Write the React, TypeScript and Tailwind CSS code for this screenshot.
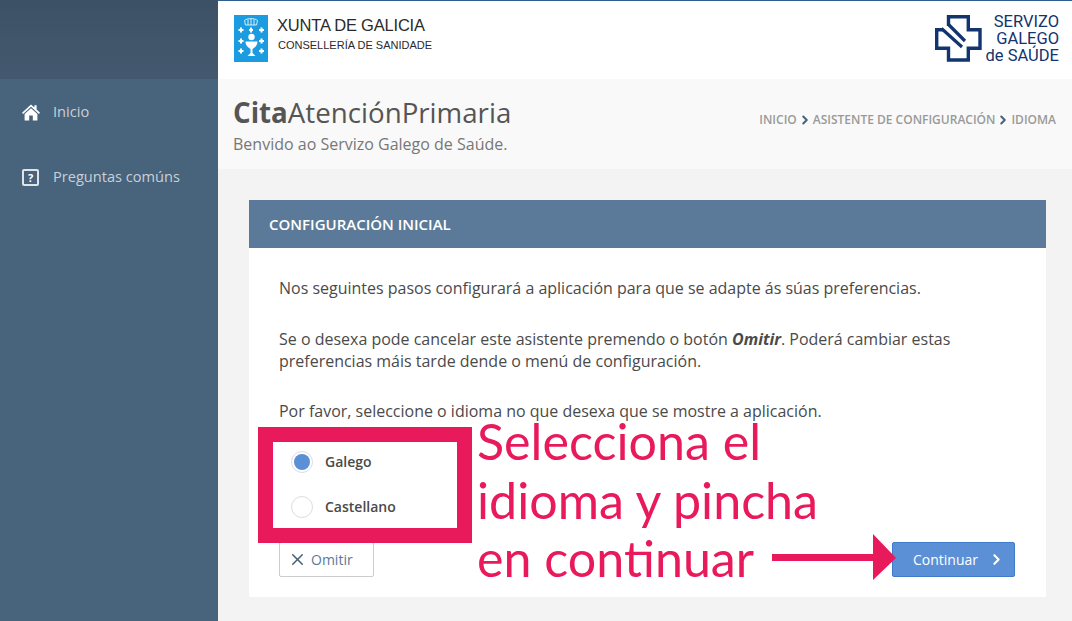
import { FC, ReactNode } from "react"
import { ChevronRight, X } from "lucide-react"

const HomeIcon: FC = () => {
    return <svg width="18" height="17" viewBox="0 0 18 17" fill="#ffffff">
        <path d="M9 0.5 L12.4 3.6 V1.2 H14.6 V5.6 L18 8.7 L16.9 9.9 L9 2.8 L1.1 9.9 L0 8.7 Z" />
        <path d="M9 4.2 L15.4 9.9 V16.5 H10.8 V11.4 H7.2 V16.5 H2.6 V9.9 Z" />
    </svg>
}

const QuestionIcon: FC = () => {
    return <span className="flex h-[17px] w-[17px] items-center justify-center rounded-[2px] border-2 border-[#dfe4e9] text-[11px] leading-none font-bold text-white">?</span>
}

const XuntaLogo: FC = () => {
    return <svg width="34" height="47" viewBox="0 0 34 47">
        <rect width="34" height="47" fill="#1b9ce0" />
        <path d="M11.500 10 L10.500 5.500 C13 3 21 3 23.500 5.500 L22.500 10 Z M14 10 V4.500 M17 10 V4 M20 10 V4.500" fill="none" stroke="#fff" strokeWidth="0.8" />
        <path d="M4.500 14h1.500v-1.500h2v1.500h1.500v2h-1.500v1.500h-2v-1.500h-1.500z M15 14h1v-1.500h2v1.500h1v2h-1v1.500h-2v-1.500h-1z M25 14h1.500v-1.500h2v1.500h1.500v2h-1.500v1.500h-2v-1.500h-1.500z M4.500 25h1.500v-1.500h2v1.500h1.500v2h-1.500v1.500h-2v-1.500h-1.500z M25 25h1.500v-1.500h2v1.500h1.500v2h-1.500v1.500h-2v-1.500h-1.500z M4.500 35h1.500v-1.500h2v1.500h1.500v2h-1.500v1.500h-2v-1.500h-1.500z M25 35h1.500v-1.500h2v1.500h1.500v2h-1.500v1.500h-2v-1.500h-1.500z" fill="#fff" />
        <circle cx="17.500" cy="22" r="3.200" fill="#fff" />
        <path d="M11.500 26.500 H23.500 C23.500 31 20 33 18.500 34 V38 L21.500 41 H13.500 L16.500 38 V34 C15 33 11.500 31 11.500 26.500 Z" fill="#fff" />
    </svg>
}

const SergasLogo: FC = () => {
    return <svg width="47" height="47" viewBox="0 0 47 47" fill="none">
        <path d="M13.500 11 V1.700 H33.300 V14.700 H45 V33.300 H33.300 V45 H13.500 V33.300 H1.700 V14.700 H8" stroke="#12346f" strokeWidth="3.400" />
        <path d="M6.500 13.500 L27 32 M14 10 L30 26" stroke="#12346f" strokeWidth="3.200" />
    </svg>
}

const Radio: FC<{ label: string, checked?: boolean }> = ({ label, checked }) => {
    return <div className="flex h-[45px] items-center">
        <span className="flex h-[22px] w-[22px] items-center justify-center rounded-full border border-[#dddddd] bg-white">
            {checked && <span className="h-4 w-4 rounded-full bg-[#5b8fd6]" />}
        </span>
        <span className="ml-[12px] text-[14px] font-semibold text-[#4a4a4a]">{label}</span>
    </div>
}

const NavItem: FC<{ icon: ReactNode, label: string, className?: string }> = ({ icon, label, className }) => {
    return <div className={`flex items-center text-[14.600px] text-[#c8d0d8] ${className}`}>
        <span className="flex w-[31px]">{icon}</span>
        {label}
    </div>
}

export default function App() {
    return <div className="relative flex h-[621px] w-[1072px] overflow-hidden bg-[#f3f3f3] font-['Open_Sans',sans-serif]">
        <aside className="flex w-[218px] shrink-0 flex-col bg-[#48637c]">
            <div className="h-[79px] bg-gradient-to-b from-[#3d5166] to-[#44596f]" />
            <NavItem className="mt-[23px] ml-[22px] h-[20px]" icon={<HomeIcon />} label="Inicio" />
            <NavItem className="mt-[45px] ml-[22px] h-[20px]" icon={<QuestionIcon />} label="Preguntas comúns" />
        </aside>

        <main className="flex min-w-0 flex-1 flex-col">
            <header className="flex h-[79px] items-start justify-between border-t border-[#2f5f8f] bg-white">
                <div className="mt-[14px] ml-[16px] flex">
                    <XuntaLogo />
                    <div className="ml-[9px] font-['Liberation_Sans',sans-serif] text-[#2a2a2a]">
                        <div className="text-[16.500px] leading-[20px] tracking-[-0.2px]">XUNTA DE GALICIA</div>
                        <div className="mt-[3px] ml-[1px] text-[11px] leading-[14px]">CONSELLERÍA DE SANIDADE</div>
                    </div>
                </div>
                <div className="mt-[12px] mr-[13px] flex">
                    <div className="mt-[2px] mr-[4px]"><SergasLogo /></div>
                    <div className="text-right font-['Roboto',sans-serif] text-[16.500px] leading-[17px] text-[#12346f]">
                        <div>SERVIZO</div>
                        <div>GALEGO</div>
                        <div>de SAÚDE</div>
                    </div>
                </div>
            </header>

            <div className="flex h-[90px] items-start justify-between bg-[#f9f9f9] pr-[16px] pl-[15px]">
                <div>
                    <h1 className="mt-[15px] text-[27.700px] leading-[36px] text-[#555555]"><b className="font-bold">Cita</b>AtenciónPrimaria</h1>
                    <p className="mt-[3px] text-[16px] leading-[22px] text-[#777777]">Benvido ao Servizo Galego de Saúde.</p>
                </div>
                <div className="mt-[32px] flex items-center text-[12px] font-semibold text-[#999999]">
                    INICIO
                    <ChevronRight size={14} strokeWidth={3.500} className="mx-[1px] text-[#48637c]" />
                    ASISTENTE DE CONFIGURACIÓN
                    <ChevronRight size={14} strokeWidth={3.500} className="mx-[1px] text-[#48637c]" />
                    IDIOMA
                </div>
            </div>

            <section className="mt-[31px] ml-[31px] flex h-[397px] w-[797px] flex-col bg-white">
                <div className="flex h-[48px] items-center bg-[#5b7a99] pl-[20px] text-[15px] font-semibold text-white">CONFIGURACIÓN INICIAL</div>
                <div className="flex flex-1 flex-col px-[30px] text-[15.990px] leading-[22px] text-[#4a4a4a]">
                    <p className="mt-[29px]">Nos seguintes pasos configurará a aplicación para que se adapte ás súas preferencias.</p>
                    <p className="mt-[29px]">Se o desexa pode cancelar este asistente premendo o botón <b className="font-bold italic">Omitir</b>. Poderá cambiar estas<br />preferencias máis tarde dende o menú de configuración.</p>
                    <p className="mt-[28px]">Por favor, seleccione o idioma no que desexa que se mostre a aplicación.</p>
                    <div className="mt-[17px] ml-[12px] flex flex-col">
                        <Radio label="Galego" checked />
                        <Radio label="Castellano" />
                    </div>
                    <div className="mt-[13px] flex items-center justify-between">
                        <button className="flex h-[35px] w-[95px] items-center rounded-[2px] border border-[#cccccc] bg-white pl-[8px] text-[14px] text-[#5b7a99]">
                            <X size={19} strokeWidth={2} className="mr-[4px] text-[#48637c]" />
                            Omitir
                        </button>
                        <button className="mr-[1px] flex h-[35px] w-[123px] items-center rounded-[2px] border border-[#3f7ccb] bg-[#5b8fd6] pl-[20px] text-[14px] text-white">
                            Continuar
                            <ChevronRight size={17} strokeWidth={3} className="ml-[10px]" />
                        </button>
                    </div>
                </div>
            </section>
        </main>

        {/* anotacion encima da captura */}
        <div className="absolute top-[427px] left-[258px] h-[116px] w-[214px] border-[15px] border-[#e81a5b]" />
        <div className="absolute top-[412px] left-[477px] font-['Lato',sans-serif] text-[50.200px] leading-[58.500px] text-[#e81a5b]">
            Selecciona el<br />idioma y pincha<br />en continuar
        </div>
        <svg className="absolute top-[534px] left-[772px]" width="125" height="47" viewBox="0 0 125 47">
            <path d="M0 20 H101 V0 L124 24 L101 46 V27 H0 Z" fill="#e81a5b" />
        </svg>
    </div>
}
